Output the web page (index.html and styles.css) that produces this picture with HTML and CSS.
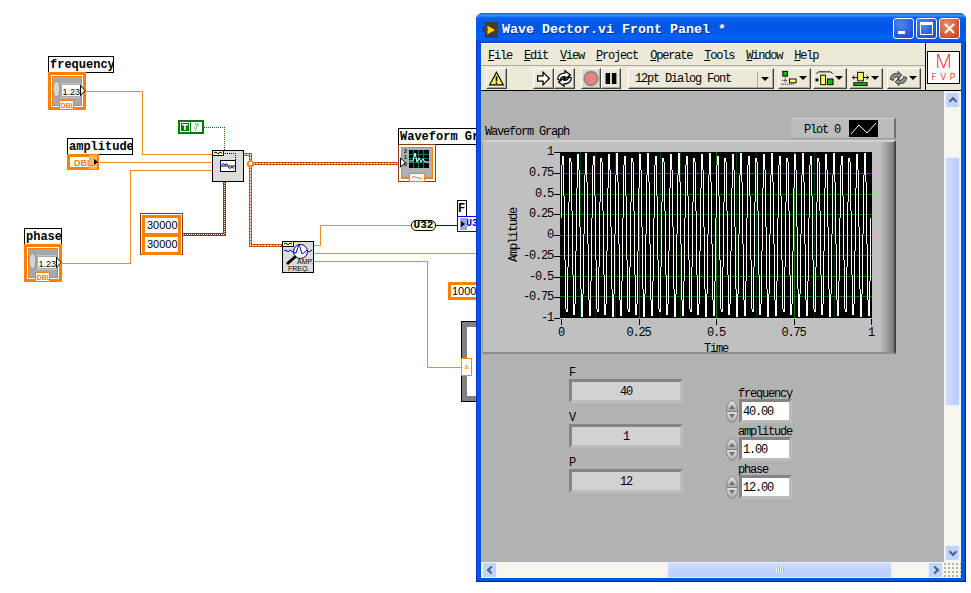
FILE: index.html
```html
<!DOCTYPE html>
<html lang="en">
<head>
<meta charset="utf-8">
<title>Wave Dector.vi</title>
<link rel="stylesheet" href="styles.css">
<script src="script.js" defer></script>
</head>
<body>
<div class="desktop">
  <svg class="wires" width="480" height="593" viewBox="0 0 480 593" aria-hidden="true">
    <path class="w-num" d="M86 91.500H142.500V154.500H212M99 162.500H212M62 263.500H130.500V170.500H212"/>
    <path class="w-bool" d="M204 127.500H224.500V150"/>
    <path class="w-arr-o" d="M183 234.500H224.500V182"/>
    <path class="w-arr-i" d="M183 234.500H224.500V182"/>
    <path class="w-wave-o" d="M244 154.500H250.500V245.500H282M250 163.500H398"/>
    <path class="w-wave-i" d="M244 154.500H250.500V245.500H282M250 163.500H398"/>
    <circle cx="250.500" cy="163.500" r="2.500" fill="#fff" stroke="#f58a1f" stroke-width="2"/>
    <path class="w-num" d="M314 245.500H320.500V225.500H411M314 253.500H477M314 261.500H427.500V367.500H461"/>
    <path class="w-u32" d="M436 225.500H458"/>
  </svg>

  <div class="lbl lbl-frequency">frequency</div>
  <svg class="node term-frequency" viewBox="0 0 38 38">
    <rect width="38" height="38" fill="#ff8000"/>
    <rect x="3" y="3" width="32" height="32" fill="#fff"/>
    <rect x="4" y="4" width="30" height="30" fill="#ff8000"/>
    <rect x="5" y="5" width="28" height="28" fill="#a8a8a8"/>
    <ellipse cx="8.500" cy="17" rx="3.500" ry="8" fill="#d4d4d4" stroke="#8c8c8c"/>
    <rect x="14" y="13" width="18" height="11" fill="#fff"/>
    <rect x="12" y="11" width="20" height="1" fill="#c4c4c4"/>
    <rect x="12" y="25" width="20" height="1" fill="#c4c4c4"/>
    <text x="14.500" y="22.500" class="t-123">1.23</text>
    <path d="M32.500 13.500 37 18.500 32.500 23.500Z" fill="#fff" stroke="#000"/>
    <rect x="11.500" y="28.500" width="14" height="9" fill="#fff" stroke="#ff8000"/>
    <text x="12.500" y="36" class="t-dbl">DBL</text>
  </svg>

  <div class="lbl lbl-amplitude">amplitude</div>
  <svg class="node term-amplitude" viewBox="0 0 32 16">
    <rect width="32" height="16" fill="#ff8000"/>
    <rect x="3" y="3" width="26" height="10" fill="#fff"/>
    <rect x="22" y="1" width="8" height="14" fill="#ffb366"/>
    <text x="7" y="12" class="t-dbl-big">DBL</text>
    <path d="M27 5 31 8 27 11Z" fill="#000"/>
  </svg>

  <svg class="node bool" viewBox="0 0 26 14">
    <rect width="26" height="14" fill="#007a00"/>
    <rect x="2" y="2" width="10" height="10" fill="#fff"/>
    <rect x="3" y="3" width="8" height="8" fill="#007a00"/>
    <path d="M4 4h6v1.500H7.800V10H6.200V5.500H4Z" fill="#fff"/>
    <rect x="13" y="2" width="11" height="10" fill="#fff"/>
    <path d="M17 4h1M19 4h1M18 6h1M20 5h1M16 8h1M18 8h1M17 10h1" stroke="#007a00"/>
  </svg>

  <svg class="node simulate" viewBox="0 0 32 32">
    <rect x=".5" y=".5" width="31" height="31" fill="#dcdcdc" stroke="#000"/>
    <rect x=".5" y=".5" width="11" height="5" fill="#ffffc0" stroke="#000"/>
    <path d="M2 3 4 2 6 4 8 2 10 3" fill="none" stroke="#000"/>
    <path d="M13 3.500H23.500V10" fill="none" stroke="#000" stroke-dasharray="1 1"/>
    <rect x="8.500" y="10.500" width="15" height="11" fill="#fff" stroke="#000"/>
    <path d="M9 16h14" stroke="#000"/>
    <path d="M10 15 11 13.500 13 15 14 13.500 16 15M16 17 18 18.500 20 17 22 18.500" fill="none" stroke="#0000e0"/>
  </svg>

  <div class="num-array">
    <div class="num-cell">30000</div>
    <div class="num-cell">30000</div>
  </div>

  <div class="lbl lbl-phase">phase</div>
  <svg class="node term-phase" viewBox="0 0 38 38">
    <rect width="38" height="38" fill="#ff8000"/>
    <rect x="3" y="3" width="32" height="32" fill="#fff"/>
    <rect x="4" y="4" width="30" height="30" fill="#ff8000"/>
    <rect x="5" y="5" width="28" height="28" fill="#a8a8a8"/>
    <ellipse cx="8.500" cy="17" rx="3.500" ry="8" fill="#d4d4d4" stroke="#8c8c8c"/>
    <rect x="14" y="13" width="18" height="11" fill="#fff"/>
    <rect x="12" y="11" width="20" height="1" fill="#c4c4c4"/>
    <rect x="12" y="25" width="20" height="1" fill="#c4c4c4"/>
    <text x="14.500" y="22.500" class="t-123">1.23</text>
    <path d="M32.500 13.500 37 18.500 32.500 23.500Z" fill="#fff" stroke="#000"/>
    <rect x="11.500" y="28.500" width="14" height="9" fill="#fff" stroke="#ff8000"/>
    <text x="12.500" y="36" class="t-dbl">DBL</text>
  </svg>

  <div class="lbl lbl-graph">Waveform Graph</div>
  <svg class="node term-graph" viewBox="0 0 38 38">
    <rect x=".5" y=".5" width="37" height="37" fill="#fff" stroke="#8a3a10"/>
    <rect x="3" y="3" width="32" height="32" fill="#ff8000"/>
    <rect x="4" y="4" width="30" height="29" fill="#b0b0b0"/>
    <rect x="11" y="6" width="20" height="18" fill="#000"/>
    <path d="M11 10.500H31M11 14.500H31M11 18.500H31M15.500 6V24M20.500 6V24M25.500 6V24" stroke="#1f6f6f"/>
    <path d="M11 17H15L17 9 19 18 21 14 23 18 25 15 27 18H31" fill="none" stroke="#fff"/>
    <path d="M2.500 14 7.500 18.500 2.500 23Z" fill="#fff" stroke="#000"/>
    <text x="6" y="9" class="t-axis">2</text>
    <text x="6" y="15" class="t-axis">1</text>
    <text x="6" y="22" class="t-axis">0</text>
    <rect x="11.500" y="29.500" width="15" height="8" fill="#fff" stroke="#ff8000"/>
    <path d="M14 34 16 32 18 34 20 33 22 35 24 34" fill="none" stroke="#ff8000"/>
  </svg>

  <svg class="node amp" viewBox="0 0 32 32">
    <rect x=".5" y=".5" width="31" height="31" fill="#dcdcdc" stroke="#000"/>
    <rect x=".5" y=".5" width="11" height="5" fill="#ffffc0" stroke="#000"/>
    <path d="M2 3 4 2 6 4 8 2 10 3" fill="none" stroke="#000"/>
    <circle cx="18.500" cy="10.500" r="7" fill="#fff" stroke="#000"/>
    <path d="M2 10 4 9 6 11 8 9 11 11 14 12 17 3 20 13 23 11 25 9 27 11 30 9" fill="none" stroke="#0000e0"/>
    <path d="M13.500 15.500 5 23" stroke="#000" stroke-width="3"/>
    <text x="15" y="22.500" class="t-amp">AMP.</text>
    <text x="6" y="30" class="t-amp">FREQ.</text>
  </svg>

  <div class="u32">U32</div>

  <div class="lbl lbl-f">F</div>
  <div class="u32-term"><span class="u32-arrow"></span>U32</div>

  <div class="const-1000">1000</div>

  <div class="loop">
    <div class="tunnel">a</div>
  </div>

  <section class="window">
    <header class="titlebar">
      <svg class="app-icon" viewBox="0 0 16 16" aria-hidden="true">
        <rect x="2" width="13" height="16" fill="#3c3c3c"/>
        <path d="M4 3 13 8 4 13Z" fill="#f5d800" stroke="#5a4a00"/>
        <path d="M0 7.500H5M11 7.500H16" stroke="#e00000" stroke-width="1.500"/>
        <path d="M0 5v5" stroke="#0000e0" stroke-width="2"/>
      </svg>
      <h1 class="title">Wave Dector.vi Front Panel *</h1>
      <div class="caption-btns">
        <span class="cap-btn"><i class="cap-min"></i></span>
        <span class="cap-btn"><i class="cap-max"></i></span>
        <span class="cap-btn cap-close">
          <svg viewBox="0 0 21 21" aria-hidden="true"><path d="M6 6 15 15M15 6 6 15" stroke="#fff" stroke-width="2.200"/></svg>
        </span>
      </div>
    </header>

    <div class="client">
      <div class="bars">
        <div class="bars-main">
          <nav class="menu">
            <span><u>F</u>ile</span>
            <span><u>E</u>dit</span>
            <span><u>V</u>iew</span>
            <span><u>P</u>roject</span>
            <span><u>O</u>perate</span>
            <span><u>T</u>ools</span>
            <span><u>W</u>indow</span>
            <span><u>H</u>elp</span>
          </nav>
          <div class="toolbar">
            <button class="tb tb-warn" type="button">
              <svg viewBox="0 0 21 20"><path d="M10.500 3 18 17H3Z" fill="#ffef5c" stroke="#000" stroke-width="1.300"/><path d="M10.500 7.500V13M10.500 14.200V15.800" stroke="#000" stroke-width="1.800"/></svg>
            </button>
            <button class="tb tb-run" type="button">
              <svg viewBox="0 0 21 20"><path d="M4 7H10V3L17 10 10 17V13H4Z" fill="#fff" stroke="#000" stroke-width="1.400"/></svg>
            </button>
            <button class="tb tb-cont" type="button">
              <svg viewBox="0 0 21 20"><path d="M3 11C3 6 7 4 11 4V1.500L17 6 11 10.500V8C8 8 6 9 6 12ZM18 9C18 14 14 16 10 16V18.500L4 14 10 9.500V12C13 12 15 11 15 8Z" fill="#fff" stroke="#000" stroke-width="1.400"/></svg>
            </button>
            <button class="tb tb-abort" type="button">
              <svg viewBox="0 0 20 20"><circle cx="10" cy="10" r="7.500" fill="#e98282" stroke="#8c8c84" stroke-width="2"/></svg>
            </button>
            <button class="tb tb-pause" type="button">
              <svg viewBox="0 0 20 20"><path d="M4 4h5v12H4ZM11 4h5v12h-5Z" fill="#000"/></svg>
            </button>
            <div class="tb font-select">
              <span class="font-name">12pt Dialog Font</span>
              <span class="font-caret"></span>
            </div>
            <button class="tb tb-drop tb-align" type="button">
              <svg viewBox="0 0 20 20"><rect x="3.500" y="2.500" width="5" height="5" fill="#00c000" stroke="#000"/><path d="M6 9v6M3 12h6M2 16h14" stroke="#000" stroke-dasharray="1 1"/><rect x="10.500" y="10.500" width="7" height="4" fill="#ffff60" stroke="#000"/></svg>
              <span class="mini-caret"></span>
            </button>
            <button class="tb tb-drop tb-dist" type="button">
              <svg viewBox="0 0 21 20"><path d="M2 5 4 3H17L19 5" fill="none" stroke="#000"/><rect x="1" y="10" width="3" height="3"/><rect x="6.500" y="6.500" width="5" height="10" fill="#ffff60" stroke="#000"/><rect x="13.500" y="10.500" width="6" height="6" fill="#00c000" stroke="#000"/></svg>
              <span class="mini-caret"></span>
            </button>
            <button class="tb tb-drop tb-resize" type="button">
              <svg viewBox="0 0 21 20"><path d="M2 9H7M14 9H19M4 7 2 9 4 11M17 7 19 9 17 11" fill="none" stroke="#000"/><rect x="7.500" y="3.500" width="6" height="9" fill="#ffff60" stroke="#000"/><rect x="3.500" y="14.500" width="14" height="3" fill="#00c000" stroke="#000"/></svg>
              <span class="mini-caret"></span>
            </button>
            <button class="tb tb-drop tb-order" type="button">
              <svg viewBox="0 0 21 20"><path d="M2 11C2 6 6 4 10 5V2.500L14 6.500 10 10.500V8C8 8 5 9 5 12ZM19 9C19 14 15 16 11 15V17.500L7 13.500 11 9.500V12C13 12 16 11 16 8Z" fill="#8c8c8c" stroke="#333"/></svg>
              <span class="mini-caret"></span>
            </button>
          </div>
        </div>
        <div class="vi-icon-cell">
          <div class="vi-icon">
            <span class="vi-m">M</span>
            <span class="vi-fvp">F V P</span>
          </div>
        </div>
      </div>

      <div class="work">
        <main class="panel">
          <div class="graph">
            <div class="graph-head">
              <span class="graph-title">Waveform Graph</span>
              <div class="legend">
                <span class="legend-name">Plot 0</span>
                <svg class="legend-swatch" viewBox="0 0 29 17" aria-hidden="true">
                  <rect width="29" height="17" fill="#000"/>
                  <path d="M2 14 10 5 18 13 27 3" fill="none" stroke="#fff"/>
                </svg>
              </div>
            </div>
            <div class="graph-frame">
              <div class="y-title">Amplitude</div>
              <div class="y-scale">
                <span class="y-tick">1</span>
                <span class="y-tick">0.75</span>
                <span class="y-tick">0.5</span>
                <span class="y-tick">0.25</span>
                <span class="y-tick">0</span>
                <span class="y-tick">-0.25</span>
                <span class="y-tick">-0.5</span>
                <span class="y-tick">-0.75</span>
                <span class="y-tick">-1</span>
              </div>
              <div class="plot-col">
                <svg class="plot" width="312" height="166" viewBox="0 0 312 166" aria-hidden="true">
                  <rect width="312" height="166" fill="#000"/>
                  <path class="grid-minor" d="M20.500 0V166M35.500 0V166M55.500 0V166M100.500 0V166M120.500 0V166M176.500 0V166M196.500 0V166M254.500 0V166M274.500 0V166"/>
                  <path class="grid" d="M0 21.500H312M0 42.500H312M0 62.500H312M0 83.500H312M0 103.500H312M0 124.500H312M0 144.500H312M79.500 0V166M156.500 0V166M234.500 0V166"/>
                  <path id="wave" class="wave" d=""/>
                </svg>
                <div class="x-scale">
                  <span class="x-tick">0</span>
                  <span class="x-tick">0.25</span>
                  <span class="x-tick">0.5</span>
                  <span class="x-tick">0.75</span>
                  <span class="x-tick">1</span>
                </div>
                <div class="x-title">Time</div>
              </div>
            </div>
          </div>

          <div class="fields">
            <div class="indicators">
              <div class="field">
                <div class="field-label">F</div>
                <div class="readout">40</div>
              </div>
              <div class="field">
                <div class="field-label">V</div>
                <div class="readout">1</div>
              </div>
              <div class="field">
                <div class="field-label">P</div>
                <div class="readout">12</div>
              </div>
            </div>
            <div class="controls">
              <div class="control">
                <div class="control-label">frequency</div>
                <div class="control-row"><span class="spinner"></span><div class="entry">40.00</div></div>
              </div>
              <div class="control">
                <div class="control-label">amplitude</div>
                <div class="control-row"><span class="spinner"></span><div class="entry">1.00</div></div>
              </div>
              <div class="control">
                <div class="control-label">phase</div>
                <div class="control-row"><span class="spinner"></span><div class="entry">12.00</div></div>
              </div>
            </div>
          </div>
        </main>

        <aside class="vscroll">
          <span class="sb-btn"><i class="chev chev-up"></i></span>
          <span class="vtrack"><span class="vthumb"></span></span>
          <span class="sb-btn"><i class="chev chev-down"></i></span>
        </aside>
      </div>

      <div class="hscroll">
        <span class="sb-btn"><i class="chev chev-left"></i></span>
        <span class="htrack"><span class="hthumb"><i class="grip"></i></span></span>
        <span class="sb-btn"><i class="chev chev-right"></i></span>
        <span class="corner"></span>
      </div>
    </div>
  </section>
</div>
</body>
</html>
```
FILE: styles.css
```css
* { box-sizing: border-box; }
html, body { margin: 0; height: 100%; }
body { background: #fff; overflow: hidden; font-family: "Liberation Mono", "DejaVu Sans Mono", monospace; }
.desktop { position: relative; width: 971px; height: 593px; overflow: hidden; }

/* block diagram: a free canvas */
.wires { position: absolute; left: 0; top: 0; shape-rendering: crispEdges; }
.wires path { fill: none; }
.w-num { stroke: #f58a1f; stroke-width: 1; }
.w-bool { stroke: #007a00; stroke-width: 1; stroke-dasharray: 1 1; }
.w-arr-o { stroke: #7f3a16; stroke-width: 3; }
.w-arr-i { stroke: #fff; stroke-width: 1; stroke-dasharray: 1 1; }
.w-wave-o { stroke: #c2520f; stroke-width: 3; }
.w-wave-i { stroke: #fff; stroke-width: 1; stroke-dasharray: 2 1; }
.w-u32 { stroke: #0000e0; stroke-width: 1; }

.lbl {
  position: absolute; height: 17px; background: #fff; border: 1px solid #000;
  font: bold 12px/17px "Liberation Mono", monospace; color: #000; padding-left: 1px; white-space: nowrap; overflow: hidden;
}
.lbl-frequency { left: 48px; top: 56px; width: 66px; }
.lbl-amplitude { left: 67px; top: 138px; width: 66px; }
.lbl-phase { left: 24px; top: 228px; width: 38px; }
.lbl-graph { left: 398px; top: 128px; width: 82px; }
.lbl-f { left: 457px; top: 200px; width: 10px; padding-left: 0; }

.node { position: absolute; display: block; }
.term-frequency { left: 48px; top: 72px; width: 38px; height: 38px; }
.term-amplitude { left: 67px; top: 154px; width: 32px; height: 16px; }
.term-phase { left: 24px; top: 244px; width: 38px; height: 38px; }
.term-graph { left: 398px; top: 144px; width: 38px; height: 38px; }
.bool { left: 178px; top: 120px; width: 26px; height: 14px; }
.simulate { left: 212px; top: 150px; width: 32px; height: 32px; }
.amp { left: 282px; top: 241px; width: 32px; height: 32px; }

.t-123 { font: 9px "Liberation Sans", sans-serif; fill: #000; }
.t-dbl { font: bold 7px "Liberation Sans", sans-serif; fill: #ff8000; }
.t-dbl-big { font: bold 9px "Liberation Sans", sans-serif; fill: #ff8000; }
.t-axis { font: bold 5px "Liberation Sans", sans-serif; fill: #000; }
.t-amp { font: 7px "Liberation Sans", sans-serif; fill: #000; }

.num-array {
  position: absolute; left: 140px; top: 213px; width: 43px; height: 42px;
  border: 1px solid #8a3a10; background: #fff; padding: 1px;
  display: flex; flex-direction: column;
}
.num-cell {
  flex: 1; background: #fff; border: 3px solid #ff8000; border-bottom-width: 2px;
  font: 11px/15px "Liberation Sans", sans-serif; padding-left: 2px; color: #000;
}
.num-cell + .num-cell { border-top-width: 2px; border-bottom-width: 3px; }

.u32 {
  position: absolute; left: 411px; top: 220px; width: 25px; height: 11px;
  background: #ffffd8; border: 1px solid #000; border-radius: 5px / 5px;
  font: bold 11px/9px "Liberation Mono", monospace; color: #000; text-align: center;
}
.u32-term {
  position: absolute; left: 457px; top: 216px; width: 22px; height: 16px;
  border: 1px solid #0000e0; background: #fff;
  font: bold 10px/14px "Liberation Mono", monospace; color: #0000e0; padding-left: 8px;
}
.u32-arrow {
  position: absolute; left: 2px; top: 1px; width: 7px; height: 12px; background: #9ba4ee;
}
.u32-arrow::after {
  content: ""; position: absolute; left: 1px; top: 3px;
  border-left: 4px solid #000; border-top: 3px solid transparent; border-bottom: 3px solid transparent;
}
.const-1000 {
  position: absolute; left: 448px; top: 282px; width: 40px; height: 18px;
  border: 3px solid #ff8000; background: #fff;
  font: 11px/13px "Liberation Sans", sans-serif; padding-left: 1px; color: #000;
}
.loop {
  position: absolute; left: 461px; top: 321px; width: 40px; height: 81px;
  background: #fff; border: 6px solid #808080; outline: 1px solid #000; outline-offset: -1px;
}
.tunnel {
  position: absolute; left: -6px; top: 31px; width: 11px; height: 18px;
  background: #fff; border: 1px solid #f58a1f; color: #f58a1f;
  font: 8px/15px "Liberation Sans", sans-serif; text-align: center;
}

/* front panel window */
.window {
  position: absolute; left: 476px; top: 13px; width: 490px; height: 569px;
  display: flex; flex-direction: column;
  background: #0054e3; border-radius: 7px 7px 0 0; padding: 0 5px 4px;
  box-shadow: inset 1px 0 #0831d9, inset -1px 0 #001ea0, inset 0 -1px #001ea0;
}
.titlebar {
  margin: 0 -5px; height: 30px; flex: none; display: flex; align-items: center;
  padding: 0 6px 0 7px; border-radius: 7px 7px 0 0;
  background: linear-gradient(180deg, #0a5fe0 0, #3a93ff 8%, #0a60ee 16%, #0055e5 45%, #0062f5 85%, #0058e8 93%, #003dc8 100%);
}
.app-icon { width: 16px; height: 16px; flex: none; margin-top: 3px; }
.title {
  margin: 0 0 0 3px; padding-top: 3px; flex: 1; font: bold 13.33px/18px "Liberation Mono", monospace; color: #fff;
  text-shadow: 1px 1px #0a2a90; white-space: nowrap;
}
.caption-btns { display: flex; gap: 2px; }
.cap-btn {
  width: 21px; height: 21px; border: 1px solid #fff; border-radius: 3px;
  background: radial-gradient(circle at 35% 30%, #4f87f0, #2457d8 70%, #1c49c0);
  position: relative; display: block;
}
.cap-close { background: radial-gradient(circle at 35% 30%, #ee8a6a, #d9502c 70%, #c03a18); }
.cap-close svg { position: absolute; left: -1px; top: -1px; width: 21px; height: 21px; }
.cap-min { position: absolute; left: 4px; top: 12px; width: 7px; height: 3px; background: #fff; }
.cap-max { position: absolute; left: 3px; top: 3px; width: 13px; height: 13px; border: 1px solid #fff; border-top-width: 3px; }

.client { flex: 1; min-height: 0; display: flex; flex-direction: column; background: #ece9d8; }
.bars { height: 48px; flex: none; display: flex; border-bottom: 1px solid #000; }
.bars-main { flex: 1; min-width: 0; display: flex; flex-direction: column; }
.menu {
  height: 23px; flex: none; display: flex; gap: 12px; align-items: center; padding: 3px 0 0 7px;
  font-size: 12px; letter-spacing: -1.200px; color: #000; border-bottom: 1px solid #aca899; border-top: 1px solid #fff;
}
.toolbar { flex: 1; display: flex; align-items: center; padding-left: 5px; }
.tb {
  height: 21px; width: 21px; padding: 0; margin: 0; flex: none; display: flex; align-items: center;
  background: #ece9d8; border: 1px solid; border-color: #fff #404040 #404040 #fff;
  box-shadow: inset -1px -1px #aca899;
}
.tb svg { width: 100%; height: 100%; display: block; }
.tb-warn { margin-right: 26px; }
.tb-abort { margin-left: 6px; width: 20px; background: #dedbc9; }
.tb-pause { width: 20px; }
.font-select {
  width: 146px; margin-left: 7px; margin-right: 4px; padding: 2px 7px 0 6px;
  font-size: 12px; letter-spacing: -1.200px; color: #000; justify-content: space-between;
}
.font-name { white-space: nowrap; }
.font-caret { width: 12px; height: 15px; border-left: 1px solid #aca899; position: relative; margin-right: -3px; }
.font-caret::after {
  content: ""; position: absolute; left: 3px; top: 5px;
  border-top: 4px solid #000; border-left: 4px solid transparent; border-right: 4px solid transparent;
}
.tb-drop { padding-right: 11px; position: relative; margin-right: 2px; }
.tb-align { width: 33px; }
.tb-dist { width: 34px; }
.tb-resize { width: 34px; margin-right: 4px; }
.tb-order { width: 34px; margin-right: 0; }
.mini-caret {
  position: absolute; right: 3px; top: 7px;
  border-top: 4px solid #000; border-left: 4px solid transparent; border-right: 4px solid transparent;
}
.vi-icon-cell { width: 36px; flex: none; border-left: 1px solid #000; padding: 8px 0 0 1px; background: #ece9d8; }
.vi-icon {
  width: 33px; height: 33px; background: #fff; border: 1px solid #000; color: #f00;
  display: flex; flex-direction: column; align-items: center;
  font-family: Inter, "Liberation Sans", sans-serif;
}
.vi-m { font-size: 18px; font-weight: 200; line-height: 18px; height: 18px; margin-top: 1px; }
.vi-fvp { font-size: 9px; font-weight: 300; line-height: 11px; height: 11px; word-spacing: 1px; white-space: pre; }

.work { flex: 1; min-height: 0; display: flex; }
.panel { flex: 1; min-width: 0; background: #b2b2b2; padding: 27px 0 0 1px; font-size: 12px; letter-spacing: -1.200px; color: #000; overflow: hidden; }
.graph { width: 414px; }
.graph-head { height: 22px; display: flex; justify-content: space-between; align-items: flex-start; }
.graph-title { margin: 8px 0 0 3px; line-height: 12px; }
.legend {
  width: 105px; height: 21px; display: flex; align-items: center; justify-content: flex-start; gap: 9px;
  padding: 0 0 0 13px; background: #bcbcbc;
  border-top: 1px solid #cfcfcf; border-right: 2px solid #707070; border-bottom: 1px solid #9a9a9a;
}
.legend-name { padding-top: 2px; }
.legend-swatch { width: 29px; height: 17px; flex: none; }
.graph-frame {
  height: 214px; display: grid; grid-template-columns: 25px 12px 40px 312px; grid-template-rows: 166px auto;
  padding-top: 10px; border-top: 2px solid #d0d0d0; border-left: 1px solid #9a9a9a; border-bottom: 2px solid #8c8c8c; border-right: 2px solid #444;
  background: linear-gradient(to right, #c0c0c0 calc(100% - 14px), #7a7a7a 100%);
}
.y-title {
  grid-column: 2; grid-row: 1; writing-mode: vertical-rl; transform: rotate(180deg);
  text-align: center; line-height: 12px;
}
.y-scale {
  grid-column: 3; grid-row: 1; height: 166px; display: flex; flex-direction: column; justify-content: space-between; align-items: flex-end;
}
.y-tick {
  height: 0; display: flex; align-items: center; white-space: nowrap; padding-right: 7px; position: relative;
}
.y-tick::after { content: ""; position: absolute; right: 0; top: 0; width: 6px; height: 1px; background: #000; }
.plot-col { grid-column: 4; grid-row: 1 / span 2; display: flex; flex-direction: column; }
.plot { display: block; shape-rendering: crispEdges; }
.grid { stroke: #007a00; stroke-width: 1; fill: none; }
.grid-minor { stroke: #003c00; stroke-width: 1; fill: none; }
.wave { stroke: #fff; stroke-width: 1; fill: none; }
.x-scale { margin: 0 1px; display: flex; justify-content: space-between; padding-top: 9px; height: 25px; flex: none; }
.x-tick { width: 0; height: 12px; display: flex; justify-content: center; white-space: nowrap; position: relative; line-height: 12px; }
.x-tick::before { content: ""; position: absolute; left: 0; top: -8px; width: 1px; height: 6px; background: #000; }
.x-title { text-align: center; line-height: 12px; }

.fields { display: flex; padding: 12px 0 0 87px; }
.indicators { width: 114px; display: flex; flex-direction: column; gap: 8px; }
.field-label { height: 13px; line-height: 14px; }
.readout {
  height: 24px; border: 3px solid; border-color: #858585 #bcbcbc #bcbcbc #858585;
  background: #d2d2d2; text-align: center; line-height: 20px;
}
.controls { margin: 21px 0 0 43px; width: 66px; display: flex; flex-direction: column; gap: 2px; }
.control { display: flex; flex-direction: column; }
.control-label { height: 12px; line-height: 14px; padding-left: 12px; white-space: nowrap; }
.control-row { display: flex; align-items: center; gap: 1px; height: 24px; }
.spinner {
  width: 12px; height: 23px; border-radius: 6px / 11px; flex: none; border: 1px solid #8c8c8c; position: relative;
  background: linear-gradient(#e2e2e2, #a8a8a8 48%, #7c7c7c 50%, #e2e2e2 52%, #a8a8a8);
}
.spinner::before, .spinner::after {
  content: ""; position: absolute; left: 2px; border-left: 3px solid transparent; border-right: 3px solid transparent;
}
.spinner::before { top: 4px; border-bottom: 4px solid #6e6e6e; }
.spinner::after { bottom: 4px; border-top: 4px solid #6e6e6e; }
.entry {
  width: 53px; height: 24px; background: #fff; border: 3px solid; border-color: #858585 #bcbcbc #bcbcbc #858585;
  line-height: 21px; padding-left: 1px; font-size: 12px;
}

.vscroll { width: 17px; flex: none; display: flex; flex-direction: column; background: #f6f5ee; padding: 1px; }
.vtrack { flex: 1; min-height: 0; padding-top: 49px; padding-bottom: 139px; display: flex; }
.vthumb { flex: 1; background: linear-gradient(to right, #cfdcfc, #b9cdfa); border: 1px solid #e8effe; border-radius: 2px; }
.sb-btn {
  width: 15px; height: 16px; flex: none; display: flex; align-items: center; justify-content: center;
  background: #c1d3fb; border: 1px solid #eef3fe; border-radius: 2px;
}
.chev { width: 6px; height: 6px; border: solid #4d6185; border-width: 2px 0 0 2px; display: block; }
.chev-up { transform: translateY(1px) rotate(45deg); }
.chev-down { transform: translateY(-1px) rotate(225deg); }
.chev-left { transform: translateX(1px) rotate(-45deg); }
.chev-right { transform: translateX(-1px) rotate(135deg); }

.hscroll { height: 16px; flex: none; display: flex; align-items: center; background: #f6f5ee; padding: 0 0 0 1px; }
.htrack { flex: 1; min-width: 0; display: flex; padding: 0 36px 0 170px; height: 16px; }
.hthumb {
  flex: 1; display: flex; align-items: center; justify-content: center;
  background: linear-gradient(#cfdcfc, #b9cdfa); border: 1px solid #e8effe; border-radius: 2px;
}
.grip { width: 8px; height: 6px; background: repeating-linear-gradient(to right, #f2f5fe 0 1px, #9fb4e2 1px 2px); }
.corner {
  width: 18px; height: 16px; flex: none;
  background: radial-gradient(circle, #b8b4a0 1px, transparent 1.200px) 0 0 / 4px 4px;
}
```
FILE: script.js
```js
// Plots the VI's signal: 40 Hz, amplitude 1, phase 12 degrees, sampled once per pixel column.
(function () {
  var wave = document.getElementById('wave');
  var x0 = 1, span = 310, mid = 83, amp = 82;
  var omega = 2 * Math.PI * 40 / span, phase = 12 * Math.PI / 180;
  var y = function (col) { return Math.round(mid - amp * Math.sin(omega * col + phase)); };
  var d = '';
  for (var col = 0; col < span; col++) {
    d += 'M' + (x0 + col + 0.5) + ' ' + y(col) + 'V' + y(col + 1);
  }
  wave.setAttribute('d', d);
})();
```
